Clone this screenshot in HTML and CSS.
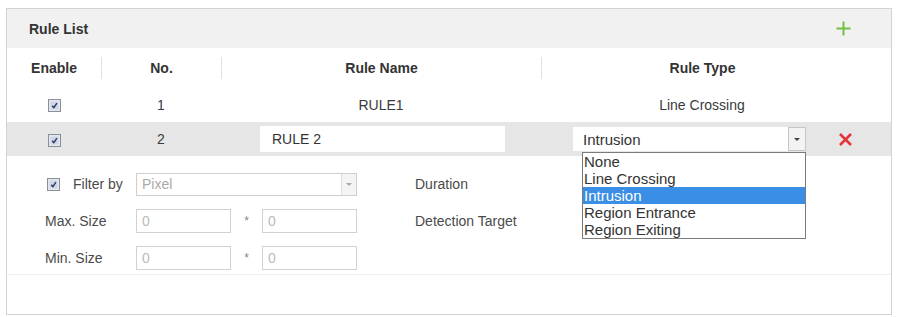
FILE: index.html
```html
<!DOCTYPE html>
<html lang="en">
<head>
<meta charset="UTF-8" />
<title>Rule List</title>
<link rel="stylesheet" href="styles.css">
</head>
<body>
  <div class="panel">
    <div class="panel-title">
      <span>Rule List</span>
      <svg class="add-btn" width="17" height="17" viewBox="0 0 17 17">
        <path d="M8.5 1.5v14M1.5 8.5h14" stroke="#72c046" stroke-width="2" fill="none" />
      </svg>
    </div>

    <div class="grid rule-head">
      <div class="th">Enable</div>
      <div class="th sep">No.</div>
      <div class="th sep">Rule Name</div>
      <div class="th sep">Rule Type</div>
    </div>

    <div class="grid rule-row">
      <div class="cell">
        <svg class="cb" width="13" height="13" viewBox="0 0 13 13">
          <rect x=".5" y=".5" width="12" height="12" fill="#e3e7ef" stroke="#8b8f98" />
          <rect x="2.5" y="2.5" width="8" height="8" fill="#cfd6e5" />
          <path d="M4.2 6.9l1.7 1.7 3-4.4" fill="none" stroke="#2f3c6a" stroke-width="1.5" />
        </svg>
      </div>
      <div class="cell">1</div>
      <div class="cell">RULE1</div>
      <div class="cell">Line Crossing</div>
    </div>

    <div class="grid rule-row active">
      <div class="cell">
        <svg class="cb" width="13" height="13" viewBox="0 0 13 13">
          <rect x=".5" y=".5" width="12" height="12" fill="#e3e7ef" stroke="#8b8f98" />
          <rect x="2.5" y="2.5" width="8" height="8" fill="#cfd6e5" />
          <path d="M4.2 6.9l1.7 1.7 3-4.4" fill="none" stroke="#2f3c6a" stroke-width="1.5" />
        </svg>
      </div>
      <div class="cell">2</div>
      <div class="cell cell-left">
        <input class="name-input" type="text" value="RULE 2" />
      </div>
      <div class="cell type-edit">
        <div class="combo">
          <span class="combo-text">Intrusion</span>
          <span class="combo-arrow"><i></i></span>
          <ul class="combo-list">
            <li>None</li>
            <li>Line Crossing</li>
            <li class="sel">Intrusion</li>
            <li>Region Entrance</li>
            <li>Region Exiting</li>
          </ul>
        </div>
        <svg class="del-btn" width="15" height="13" viewBox="0 0 15 13">
          <path d="M2 1l11 11M13 1L2 12" stroke="#e3343c" stroke-width="2.6" fill="none" />
        </svg>
      </div>
    </div>

    <div class="filter">
      <div class="frow">
        <label class="flabel">
          <svg class="cb" width="13" height="13" viewBox="0 0 13 13">
            <rect x=".5" y=".5" width="12" height="12" fill="#e3e7ef" stroke="#8b8f98" />
            <rect x="2.5" y="2.5" width="8" height="8" fill="#cfd6e5" />
            <path d="M4.2 6.9l1.7 1.7 3-4.4" fill="none" stroke="#2f3c6a" stroke-width="1.5" />
          </svg>
          Filter by
        </label>
        <div class="fselect">
          <span class="fselect-text">Pixel</span>
          <span class="fselect-arrow"><i></i></span>
        </div>
        <span class="side-label">Duration</span>
      </div>
      <div class="frow">
        <span class="flabel plain">Max. Size</span>
        <input class="num" type="text" value="0" />
        <span class="star">*</span>
        <input class="num" type="text" value="0" />
        <span class="side-label">Detection Target</span>
      </div>
      <div class="frow">
        <span class="flabel plain">Min. Size</span>
        <input class="num" type="text" value="0" />
        <span class="star">*</span>
        <input class="num" type="text" value="0" />
      </div>
    </div>

    <div class="panel-foot"></div>
  </div>
</body>
</html>
```

FILE: styles.css
```css
body {
  margin: 0;
  background-color: #fff;
  font-family: "Liberation Sans", Arial, sans-serif;
  font-size: 14px;
  color: #3a3a3a;
}

.panel {
  margin: 8px 6px 0;
  border: 1px solid #d3d3d3;
}

.panel-title {
  height: 39px;
  background-color: #f1f1f1;
  display: flex;
  align-items: center;
  justify-content: space-between;
  padding: 0 39px 0 22px;
  font-weight: bold;
  color: #333;
}

.grid {
  display: grid;
  grid-template-columns: 94px 120px 320px 322px 1fr;
  align-items: center;
}

.rule-head {
  height: 39px;
  font-weight: bold;
  color: #333;
}

.th {
  text-align: center;
  line-height: 22px;
}

.th.sep {
  border-left: 1px solid #e2e2e2;
}

.rule-row {
  height: 35px;
}

.rule-row.active {
  height: 34px;
  background-color: #e6e6e6;
}

.cell {
  text-align: center;
}

.cell-left {
  text-align: left;
}

.cb {
  display: inline-block;
  vertical-align: middle;
}

.name-input {
  margin-left: 39px;
  width: 245px;
  height: 26px;
  box-sizing: border-box;
  border: none;
  padding: 0 0 0 12px;
  font-family: inherit;
  font-size: 14px;
  color: #333;
  background-color: #fff;
}

/* 種類の選択（開いた状態） */
.type-edit {
  grid-column: 4 / 6;
  display: flex;
  align-items: center;
}

.combo {
  position: relative;
  margin-left: 32px;
  width: 233px;
  height: 24px;
  background-color: #fff;
  display: flex;
  align-items: center;
  font-size: 15px;
  text-align: left;
}

.combo-text {
  flex: 1;
  padding-left: 10px;
  color: #333;
}

.combo-arrow {
  width: 16px;
  height: 22px;
  border: 1px solid #c6c6c6;
  background-color: #f3f3f3;
  display: flex;
  align-items: center;
  justify-content: center;
}

.combo-arrow i,
.fselect-arrow i {
  width: 0;
  height: 0;
  border-left: 3px solid transparent;
  border-right: 3px solid transparent;
  border-top: 3px solid #444;
}

.combo-list {
  position: absolute;
  top: 25px;
  left: 9px;
  right: 0;
  margin: 0;
  padding: 0;
  list-style: none;
  border: 1px solid #7a7a7a;
  background-color: #fff;
  z-index: 5;
}

.combo-list li {
  line-height: 17px;
  height: 17px;
  padding-left: 1px;
  color: #333;
}

.combo-list li.sel {
  background-color: #3a8ee6;
  color: #fff;
}

.del-btn {
  margin-left: 32px;
}

.filter {
  padding: 16px 0 4px 38px;
  display: flex;
  flex-direction: column;
  gap: 13px;
  border-bottom: 1px solid #efefef;
}

.frow {
  display: flex;
  align-items: center;
  height: 24px;
}

.flabel {
  width: 91px;
  color: #4a4a4a;
  display: flex;
  align-items: center;
}

.flabel .cb {
  margin: 0 13px 0 2px;
}

.fselect {
  width: 221px;
  height: 23px;
  box-sizing: border-box;
  border: 1px solid #cfcfcf;
  display: flex;
  align-items: center;
}

.fselect-text {
  flex: 1;
  padding-left: 5px;
  color: #aaa;
}

.fselect-arrow {
  width: 14px;
  height: 21px;
  border-left: 1px solid #ddd;
  background-color: #f4f4f4;
  display: flex;
  align-items: center;
  justify-content: center;
}

.fselect-arrow i {
  border-top-color: #aaa;
}

.num {
  width: 95px;
  height: 24px;
  box-sizing: border-box;
  border: 1px solid #d2d2d2;
  padding: 0 0 0 5px;
  font-family: inherit;
  font-size: 14px;
  color: #bbb;
  background-color: #fff;
}

.star {
  width: 31px;
  text-align: center;
  font-size: 12px;
  color: #888;
}

.side-label {
  margin-left: 58px;
  color: #4a4a4a;
}

.panel-foot {
  height: 39px;
}
```
